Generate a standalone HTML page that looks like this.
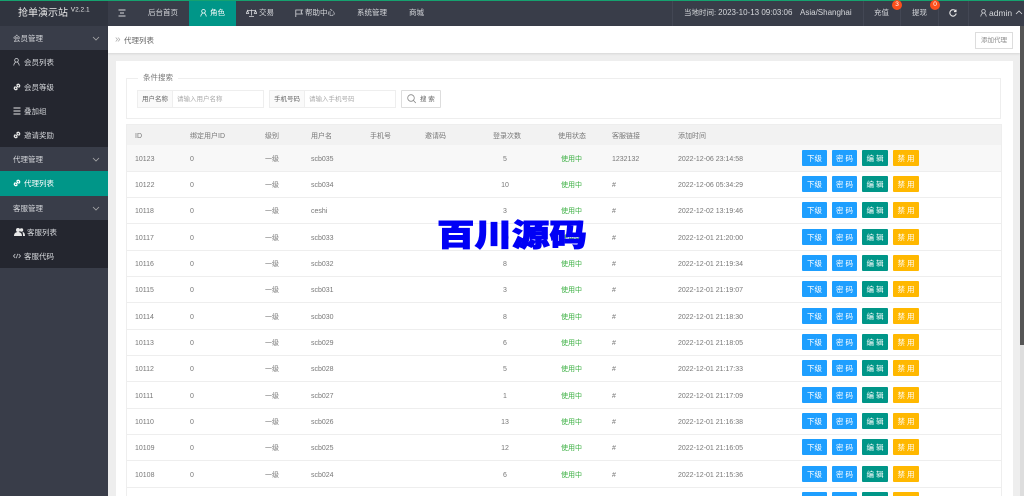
<!DOCTYPE html>
<html lang="zh"><head><meta charset="utf-8"><title>代理列表</title>
<style>
*{box-sizing:border-box}
html,body{margin:0;width:1024px;height:496px;overflow:hidden;background:#eee}
body{font:7.5px/12px "Liberation Sans","Noto Sans CJK SC",sans-serif;color:#777;position:relative;filter:blur(.3px)}
.a{position:absolute;white-space:nowrap}
#top{left:0;top:0;width:1024px;height:26px;background:#393d49;border-top:1px solid #16a16f}
#logo{left:0;top:1px;width:108px;height:25px;background:#30343f}
.n{color:#d6d8dc;top:7px}
.d{font-size:8px}
.sep{top:1px;width:1px;height:25px;background:#434754}
.badge{width:10px;height:10px;border-radius:5px;background:#fb4f1c;color:#fff;font-size:6.5px;line-height:10px;text-align:center;top:0;z-index:2}
#side{left:0;top:26px;width:108px;height:470px;background:#393d49}
.g,.i{left:0;width:108px;height:24.3px;line-height:26px;color:#d6d8dc}
.g{background:#393d49}.i{background:#24262f}
.i.on{background:#009688;color:#fff}
.g span{position:absolute;left:13px}.i span{position:absolute;left:24px}
.i svg{position:absolute;left:13px;top:8px}
.g svg{position:absolute;left:92px;top:10px}
#crumb{left:108px;top:26px;width:912px;height:27px;background:#fff;box-shadow:0 1px 2px rgba(0,0,0,.1)}
#card{left:116px;top:61px;width:897px;height:435px;background:#fff}
#sb{left:1020px;top:26px;width:4px;height:470px;background:#ddd}
#sb i{position:absolute;left:0;top:0;width:4px;height:319px;background:#555}
#fs{left:126px;top:78px;width:875px;height:41px;border:1px solid #eee}
.box{height:18px;top:90px;border:1px solid #eee;line-height:17px;background:#fff;color:#aaa;font-size:6.5px}
.lab{height:18px;top:90px;border:1px solid #eee;background:#fafafa;line-height:17px;color:#666;text-align:center;font-size:6.5px}
#tb{left:126px;top:124px;width:876px;height:372px;border:1px solid #eee;border-bottom:0;background:#fff}
#hd{left:127px;top:125px;width:874px;height:21px;background:#f2f2f2}
.r{left:127px;width:874px;height:26.33px;border-bottom:1px solid #eee;line-height:26.5px;font-size:7px}
.r span,.hs{position:absolute;white-space:nowrap}
.r span{top:1.5px}
.hs{font-size:7px;top:131px}
.r .c{width:40px;text-align:center;left:358px}
.r .s{left:434px;color:#3cb043}
.r .b{top:4.5px;height:16px;line-height:17.5px;color:#fff;text-align:center;border-radius:1px;font-size:7.5px}
.x1{left:675px;width:25px;background:#1e9fff}
.x2{left:705px;width:25px;background:#1e9fff}
.x3{left:735px;width:26px;background:#009688}
.x4{left:766px;width:26px;background:#ffb800}
.f0{left:8px}.f1{left:63px}.f2{left:138px}.f3{left:184px}.f7{left:485px}.f8{left:551px}
#wm{left:436px;top:211px;width:152px;font:900 37.5px/44px "Noto Sans CJK SC",sans-serif;color:#0000f5;-webkit-text-stroke:1.2px #0000f5;white-space:nowrap;transform:scale(1,.82);text-align:center}
</style></head><body>

<div class="a" id="top"></div>
<div class="a" id="logo"></div>
<div class="a" style="left:18px;top:7px;color:#e8e8e8;font-size:10px;line-height:14px">抢单演示站 <sup style="font-size:6.5px;line-height:0">V2.2.1</sup></div>

<div class="a" style="left:189px;top:1px;width:47px;height:25px;background:#009688"></div>
<svg class="a" style="left:118px;top:9px" width="8" height="8" viewBox="0 0 8 8" fill="none" stroke="#d6d8dc"><path d="M.5 1h7M2 4h4M.5 7h7"/></svg>
<div class="a n" style="left:148px">后台首页</div>
<svg class="a" style="left:200px;top:9px" width="7" height="8" viewBox="0 0 7 8" fill="none" stroke="#fff" stroke-width=".8"><circle cx="3.5" cy="2.3" r="1.8"/><path d="M.7 7.5C1 5.5 2 4.5 2.500 4M6.300 7.500C6 5.500 5 4.500 4.500 4"/></svg>
<div class="a n" style="left:210px;color:#fff">角色</div>
<svg class="a" style="left:246px;top:9px" width="11" height="8" viewBox="0 0 11 8" fill="none" stroke="#d6d8dc" stroke-width=".8"><path d="M5.500 .5v6M3 7.500h5M1.500 1.500h8M1.500 1.500L.3 4.500h2.400zM9.500 1.500L8.300 4.500h2.400z"/></svg>
<div class="a n" style="left:259px">交易</div>
<svg class="a" style="left:295px;top:9px" width="8" height="8" viewBox="0 0 8 8" fill="none" stroke="#d6d8dc" stroke-width=".8"><path d="M.8 8V1h6.500L6 3l1.300 2H.8"/></svg>
<div class="a n" style="left:305px">帮助中心</div>
<div class="a n" style="left:357px">系统管理</div>
<div class="a n" style="left:409px">商城</div>
<div class="a sep" style="left:672px"></div>
<div class="a n" style="left:684px">当地时间: <span class="d">2023-10-13 09:03:06</span></div>
<div class="a n d" style="left:800px">Asia/Shanghai</div>
<div class="a sep" style="left:863px"></div>
<div class="a n" style="left:874px">充值</div>
<div class="a badge" style="left:892px">3</div>
<div class="a sep" style="left:900px"></div>
<div class="a n" style="left:912px">提现</div>
<div class="a badge" style="left:930px">0</div>
<div class="a sep" style="left:938px"></div>
<svg class="a" style="left:949px;top:9px" width="8" height="8" viewBox="0 0 8 8" fill="none" stroke="#e8e8e8" stroke-width="1.100"><path d="M6.800 2.300A3.200 3.200 0 1 0 7.200 4.500M7 .6v2H5"/></svg>
<div class="a sep" style="left:968px"></div>
<svg class="a" style="left:980px;top:9px" width="7" height="8" viewBox="0 0 7 8" fill="none" stroke="#d6d8dc" stroke-width=".8"><circle cx="3.500" cy="2.300" r="1.800"/><path d="M.7 7.500C1 5.500 2 4.500 2.500 4M6.300 7.500C6 5.500 5 4.500 4.500 4"/></svg>
<div class="a n" style="left:989px;font-size:8.5px">admin</div>
<svg class="a" style="left:1015px;top:10px" width="8" height="5" viewBox="0 0 8 5" fill="none" stroke="#d6d8dc" stroke-width=".8"><path d="M1 4l3-3 3 3"/></svg>

<div class="a" id="side"></div>
<div class="a g" style="top:26px"><span>会员管理</span><svg width="8" height="5" viewBox="0 0 8 5" fill="none" stroke="#aaa" stroke-width=".8"><path d="M1 1l3 3 3-3"/></svg></div>
<div class="a i" style="top:50.3px"><svg width="7" height="8" viewBox="0 0 7 8" fill="none" stroke="#d6d8dc" stroke-width=".8"><circle cx="3.500" cy="2.300" r="1.800"/><path d="M.7 7.500C1 5.500 2 4.500 2.500 4M6.300 7.500C6 5.500 5 4.500 4.500 4"/></svg><span>会员列表</span></div>
<div class="a i" style="top:74.6px"><svg width="8" height="8" viewBox="0 0 8 8" fill="none" stroke="#e8e8e8" stroke-width="1.300"><path d="M3.500 2.500l1-1a1.500 1.500 0 0 1 2 2l-1 1M4.500 5.500l-1 1a1.500 1.500 0 0 1-2-2l1-1M3 5l2-2"/></svg><span>会员等级</span></div>
<div class="a i" style="top:98.9px"><svg width="8" height="8" viewBox="0 0 8 8" fill="none" stroke="#e8e8e8"><path d="M.5 1h7M.5 4h7M.5 7h7"/></svg><span>叠加组</span></div>
<div class="a i" style="top:123px"><svg width="8" height="8" viewBox="0 0 8 8" fill="none" stroke="#e8e8e8" stroke-width="1.300"><path d="M3.500 2.500l1-1a1.500 1.500 0 0 1 2 2l-1 1M4.500 5.500l-1 1a1.500 1.500 0 0 1-2-2l1-1M3 5l2-2"/></svg><span>邀请奖励</span></div>
<div class="a g" style="top:147px"><span>代理管理</span><svg width="8" height="5" viewBox="0 0 8 5" fill="none" stroke="#aaa" stroke-width=".8"><path d="M1 1l3 3 3-3"/></svg></div>
<div class="a i on" style="top:171.3px"><svg width="8" height="8" viewBox="0 0 8 8" fill="none" stroke="#fff" stroke-width="1.300"><path d="M3.500 2.500l1-1a1.500 1.500 0 0 1 2 2l-1 1M4.500 5.500l-1 1a1.500 1.500 0 0 1-2-2l1-1M3 5l2-2"/></svg><span>代理列表</span></div>
<div class="a g" style="top:195.6px"><span>客服管理</span><svg width="8" height="5" viewBox="0 0 8 5" fill="none" stroke="#aaa" stroke-width=".8"><path d="M1 1l3 3 3-3"/></svg></div>
<div class="a i" style="top:220px"><svg style="left:14px" width="11" height="8" viewBox="0 0 11 8" fill="#e8e8e8"><circle cx="4" cy="2" r="2"/><circle cx="7.500" cy="2" r="1.700"/><path d="M0 8c0-3 2-4 4-4s4 1 4 4zM8.500 4c1.500 0 2.500 1.500 2.500 4H9c0-2-.2-3-.5-4z"/></svg><span style="left:27px">客服列表</span></div>
<div class="a i" style="top:244px"><svg width="8" height="8" viewBox="0 0 8 8" fill="none" stroke="#d6d8dc" stroke-width=".7"><path d="M2.300 2L.5 4l1.800 2M5.700 2l1.800 2-1.800 2M4.700 1.800L3.300 6.200"/></svg><span>客服代码</span></div>

<div class="a" id="crumb"></div>
<div class="a" style="left:115px;top:33.5px;color:#aaa;font-size:10px">»</div>
<div class="a" style="left:124px;top:35px;color:#666">代理列表</div>
<div class="a" style="left:975px;top:32px;width:38px;height:17px;border:1px solid #ddd;background:#fff;line-height:16px;text-align:center;color:#888;font-size:6.5px">添加代理</div>

<div class="a" id="card"></div>
<div class="a" id="sb"><i></i></div>
<div class="a" id="fs"></div>
<div class="a" style="left:138px;top:72px;background:#fff;padding:0 5px;color:#777">条件搜索</div>
<div class="a lab" style="left:137px;width:36px">用户名称</div>
<div class="a box" style="left:172px;width:92px;padding-left:4px">请输入用户名称</div>
<div class="a lab" style="left:269px;width:36px">手机号码</div>
<div class="a box" style="left:304px;width:92px;padding-left:4px">请输入手机号码</div>
<div class="a" style="left:401px;top:90px;width:40px;height:18px;border:1px solid #ddd;border-radius:1px;background:#fff;line-height:17px;color:#666;padding-left:18px;font-size:6.5px">搜 索</div>
<svg class="a" style="left:407px;top:94px" width="9" height="10" viewBox="0 0 9 10" fill="none" stroke="#888" stroke-width=".8"><circle cx="4" cy="4" r="3.300"/><path d="M6.500 6.500L8.800 9"/></svg>

<div class="a" id="tb"></div>
<div class="a" id="hd"></div>
<div class="a hs" style="left:135px">ID</div>
<div class="a hs" style="left:190px">绑定用户ID</div>
<div class="a hs" style="left:265px">级别</div>
<div class="a hs" style="left:311px">用户名</div>
<div class="a hs" style="left:370px">手机号</div>
<div class="a hs" style="left:425px">邀请码</div>
<div class="a hs" style="left:493px">登录次数</div>
<div class="a hs" style="left:558px">使用状态</div>
<div class="a hs" style="left:612px">客服链接</div>
<div class="a hs" style="left:678px">添加时间</div>

<div class="a r" style="top:145.3px;background:#f8f8f8"><span class="f0">10123</span><span class="f1">0</span><span class="f2">一级</span><span class="f3">scb035</span><span class="c">5</span><span class="s">使用中</span><span class="f7">1232132</span><span class="f8">2022-12-06 23:14:58</span><span class="b x1">下级</span><span class="b x2">密 码</span><span class="b x3">编 辑</span><span class="b x4">禁 用</span></div>
<div class="a r" style="top:171.63px"><span class="f0">10122</span><span class="f1">0</span><span class="f2">一级</span><span class="f3">scb034</span><span class="c">10</span><span class="s">使用中</span><span class="f7">#</span><span class="f8">2022-12-06 05:34:29</span><span class="b x1">下级</span><span class="b x2">密 码</span><span class="b x3">编 辑</span><span class="b x4">禁 用</span></div>
<div class="a r" style="top:197.96px"><span class="f0">10118</span><span class="f1">0</span><span class="f2">一级</span><span class="f3">ceshi</span><span class="c">3</span><span class="s">使用中</span><span class="f7">#</span><span class="f8">2022-12-02 13:19:46</span><span class="b x1">下级</span><span class="b x2">密 码</span><span class="b x3">编 辑</span><span class="b x4">禁 用</span></div>
<div class="a r" style="top:224.29px"><span class="f0">10117</span><span class="f1">0</span><span class="f2">一级</span><span class="f3">scb033</span><span class="c">10</span><span class="s">使用中</span><span class="f7">#</span><span class="f8">2022-12-01 21:20:00</span><span class="b x1">下级</span><span class="b x2">密 码</span><span class="b x3">编 辑</span><span class="b x4">禁 用</span></div>
<div class="a r" style="top:250.62px"><span class="f0">10116</span><span class="f1">0</span><span class="f2">一级</span><span class="f3">scb032</span><span class="c">8</span><span class="s">使用中</span><span class="f7">#</span><span class="f8">2022-12-01 21:19:34</span><span class="b x1">下级</span><span class="b x2">密 码</span><span class="b x3">编 辑</span><span class="b x4">禁 用</span></div>
<div class="a r" style="top:276.95px"><span class="f0">10115</span><span class="f1">0</span><span class="f2">一级</span><span class="f3">scb031</span><span class="c">3</span><span class="s">使用中</span><span class="f7">#</span><span class="f8">2022-12-01 21:19:07</span><span class="b x1">下级</span><span class="b x2">密 码</span><span class="b x3">编 辑</span><span class="b x4">禁 用</span></div>
<div class="a r" style="top:303.28px"><span class="f0">10114</span><span class="f1">0</span><span class="f2">一级</span><span class="f3">scb030</span><span class="c">8</span><span class="s">使用中</span><span class="f7">#</span><span class="f8">2022-12-01 21:18:30</span><span class="b x1">下级</span><span class="b x2">密 码</span><span class="b x3">编 辑</span><span class="b x4">禁 用</span></div>
<div class="a r" style="top:329.61px"><span class="f0">10113</span><span class="f1">0</span><span class="f2">一级</span><span class="f3">scb029</span><span class="c">6</span><span class="s">使用中</span><span class="f7">#</span><span class="f8">2022-12-01 21:18:05</span><span class="b x1">下级</span><span class="b x2">密 码</span><span class="b x3">编 辑</span><span class="b x4">禁 用</span></div>
<div class="a r" style="top:355.94px"><span class="f0">10112</span><span class="f1">0</span><span class="f2">一级</span><span class="f3">scb028</span><span class="c">5</span><span class="s">使用中</span><span class="f7">#</span><span class="f8">2022-12-01 21:17:33</span><span class="b x1">下级</span><span class="b x2">密 码</span><span class="b x3">编 辑</span><span class="b x4">禁 用</span></div>
<div class="a r" style="top:382.27px"><span class="f0">10111</span><span class="f1">0</span><span class="f2">一级</span><span class="f3">scb027</span><span class="c">1</span><span class="s">使用中</span><span class="f7">#</span><span class="f8">2022-12-01 21:17:09</span><span class="b x1">下级</span><span class="b x2">密 码</span><span class="b x3">编 辑</span><span class="b x4">禁 用</span></div>
<div class="a r" style="top:408.6px"><span class="f0">10110</span><span class="f1">0</span><span class="f2">一级</span><span class="f3">scb026</span><span class="c">13</span><span class="s">使用中</span><span class="f7">#</span><span class="f8">2022-12-01 21:16:38</span><span class="b x1">下级</span><span class="b x2">密 码</span><span class="b x3">编 辑</span><span class="b x4">禁 用</span></div>
<div class="a r" style="top:434.93px"><span class="f0">10109</span><span class="f1">0</span><span class="f2">一级</span><span class="f3">scb025</span><span class="c">12</span><span class="s">使用中</span><span class="f7">#</span><span class="f8">2022-12-01 21:16:05</span><span class="b x1">下级</span><span class="b x2">密 码</span><span class="b x3">编 辑</span><span class="b x4">禁 用</span></div>
<div class="a r" style="top:461.26px"><span class="f0">10108</span><span class="f1">0</span><span class="f2">一级</span><span class="f3">scb024</span><span class="c">6</span><span class="s">使用中</span><span class="f7">#</span><span class="f8">2022-12-01 21:15:36</span><span class="b x1">下级</span><span class="b x2">密 码</span><span class="b x3">编 辑</span><span class="b x4">禁 用</span></div>
<div class="a r" style="top:487.59px;border-bottom:0"><span class="b x1">下级</span><span class="b x2">密 码</span><span class="b x3">编 辑</span><span class="b x4">禁 用</span></div>

<div class="a" id="wm">百川源码</div>
</body></html>
